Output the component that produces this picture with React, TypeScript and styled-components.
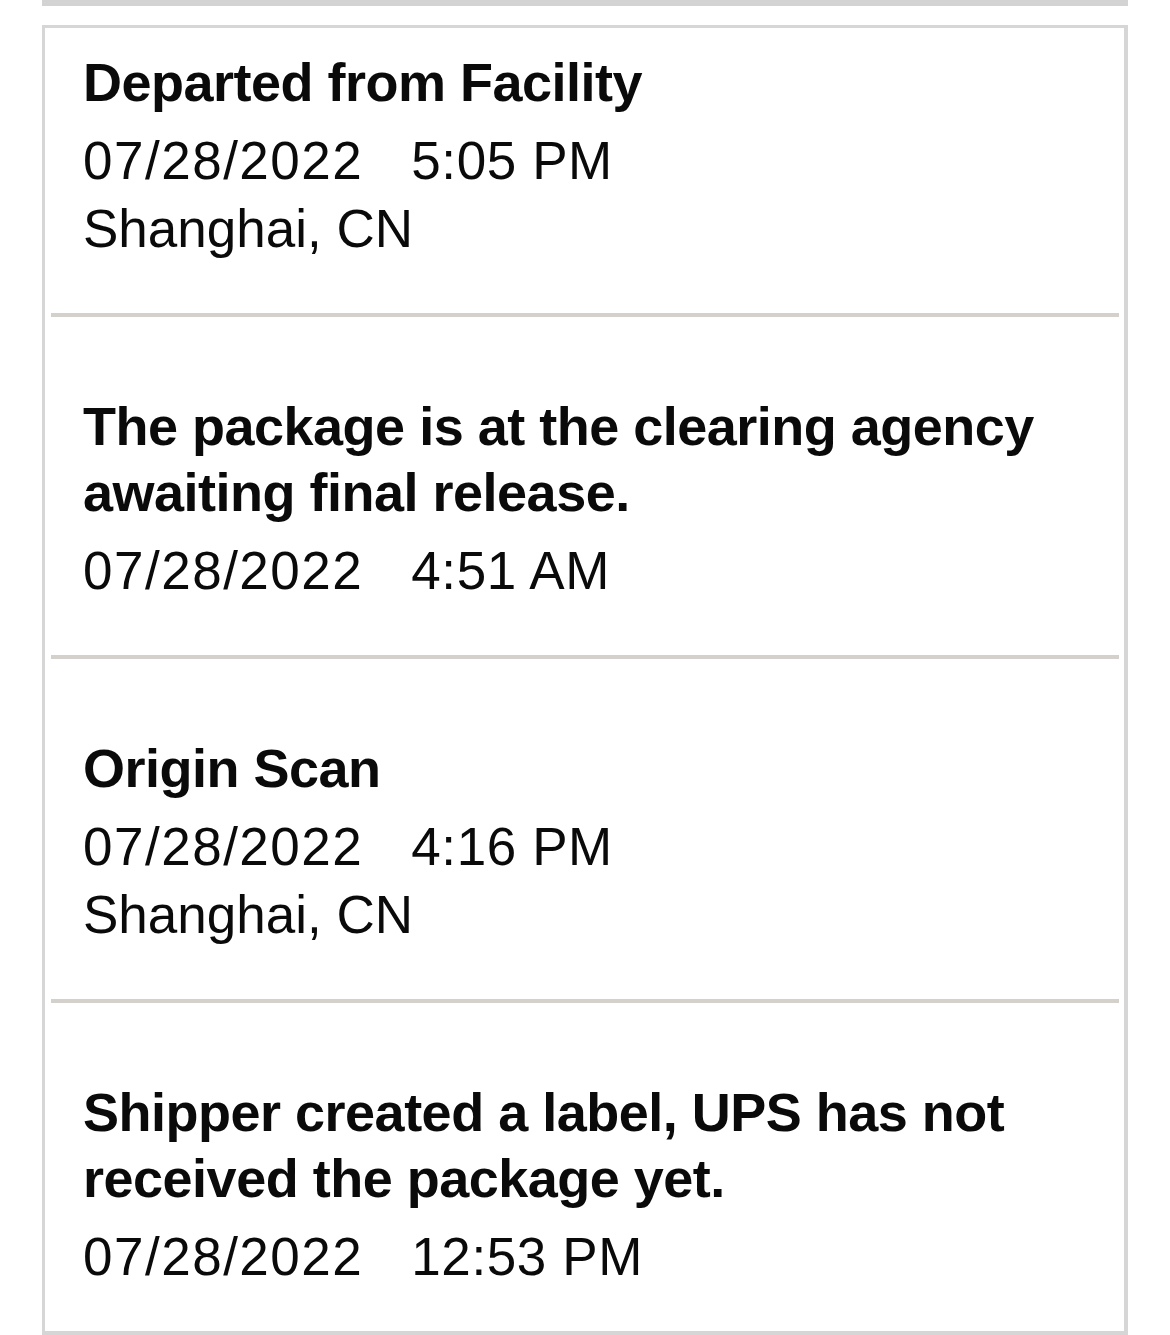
import React from 'react'
import styled, { createGlobalStyle } from 'styled-components'

const GlobalStyle = createGlobalStyle`
  html, body {
    margin: 0;
    padding: 0;
    background: #ffffff;
  }
  body {
    font-family: "Liberation Sans", Arial, sans-serif;
    color: #0a0a0a;
  }
`

const Page = styled.div`
  width: 1170px;
  padding: 0 42px 2px;
  box-sizing: border-box;
`

const TopBar = styled.div`
  height: 6px;
  background: #d3d3d3;
  margin-bottom: 19px;
`

const Card = styled.div`
  border: 3px solid #d6d6d6;
  border-right-width: 4px;
  border-bottom-width: 4px;
  background: #fff;
`

const Event = styled.div`
  padding: 76px 38px 50px;
  &:first-child {
    padding-top: 21px;
  }
  &:last-child {
    padding-bottom: 40px;
  }
`

const Divider = styled.div`
  height: 4px;
  margin: 0 5px 0 6px;
  background: #d4d0cb;
`

const Title = styled.div`
  font-size: 54px;
  font-weight: 700;
  line-height: 66px;
  letter-spacing: -0.5px;
  margin-bottom: 12px;
`

const Line = styled.div`
  font-size: 53px;
  line-height: 68px;
  display: flex;
  gap: 48px;
`

const Stamp = styled.span<{ $spread: number }>`
  letter-spacing: ${p => p.$spread}px;
`

type Item = { title: string; date: string; time: string; place?: string }

const items: Item[] = [
  { title: 'Departed from Facility', date: '07/28/2022', time: '5:05 PM', place: 'Shanghai, CN' },
  {
    title: 'The package is at the clearing agency awaiting final release.',
    date: '07/28/2022',
    time: '4:51 AM',
  },
  { title: 'Origin Scan', date: '07/28/2022', time: '4:16 PM', place: 'Shanghai, CN' },
  {
    title: 'Shipper created a label, UPS has not received the package yet.',
    date: '07/28/2022',
    time: '12:53 PM',
  },
]

export default function App() {
  return (
    <>
      <GlobalStyle />
      <Page>
        <TopBar />
        <Card>
          {items.map((it, i) => (
            <React.Fragment key={i}>
              {i > 0 && <Divider />}
              <Event>
                <Title>{it.title}</Title>
                <Line>
                  <Stamp $spread={1.5}>{it.date}</Stamp>
                  <Stamp $spread={0.6}>{it.time}</Stamp>
                </Line>
                {it.place && <Line>{it.place}</Line>}
              </Event>
            </React.Fragment>
          ))}
        </Card>
      </Page>
    </>
  )
}
